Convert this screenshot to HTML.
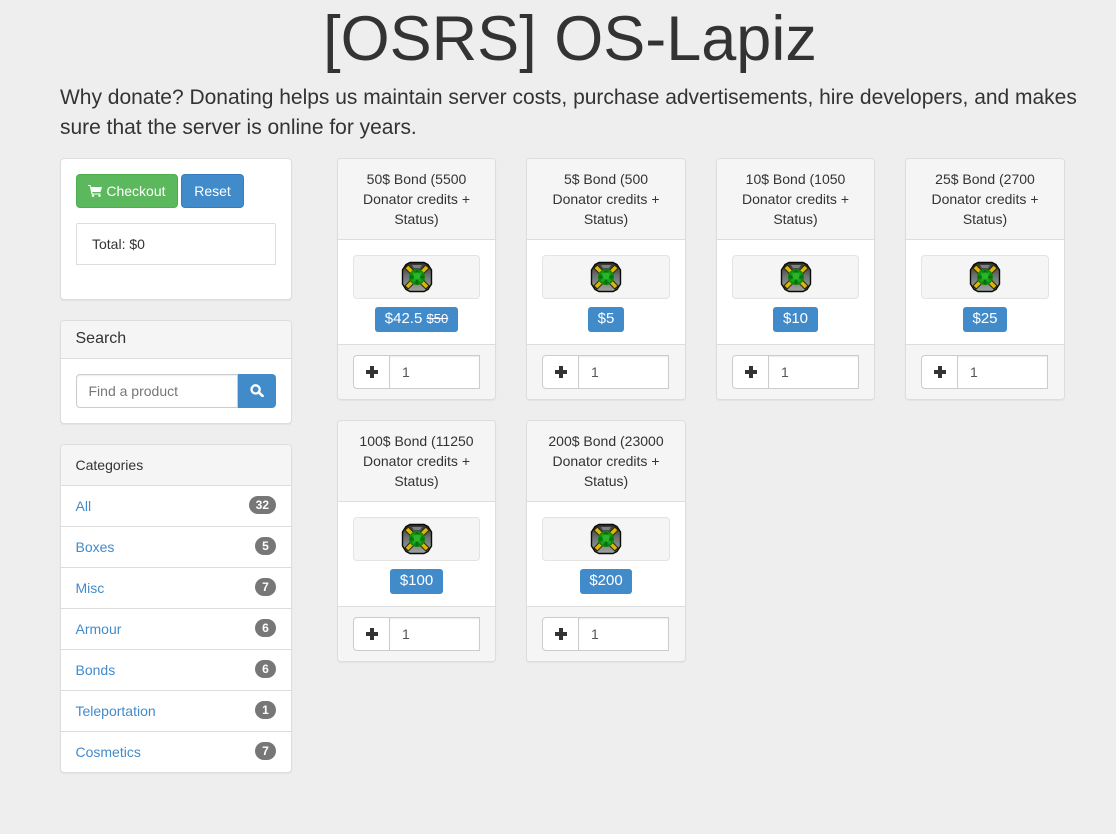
<!DOCTYPE html>
<html><head><meta charset="utf-8"><title>[OSRS] OS-Lapiz</title>
<style>
*{box-sizing:border-box}
html,body{margin:0;padding:0}
body{width:1116px;height:834px;overflow:hidden;background:#eee;font-family:"Liberation Sans",sans-serif;font-size:14px;line-height:20px;color:#333;position:relative}
.a{position:absolute}
h1{position:absolute;left:0;top:5px;width:1140px;margin:0;text-align:center;font-size:63px;line-height:69px;font-weight:400;color:#333}
p.lead{position:absolute;left:60px;top:83px;width:1040px;margin:0;font-size:21px;letter-spacing:-.01px;line-height:30px;color:#333}
.panel{position:absolute;background:#fff;border:1px solid #ddd;border-radius:4px;box-shadow:0 1px 1px rgba(0,0,0,.05)}
.head{background:#f5f5f5;border-bottom:1px solid #ddd;border-radius:3px 3px 0 0}
.btn{position:absolute;top:174px;height:34px;border-radius:4px;color:#fff;text-align:center;line-height:32px;border:1px solid}
.item{position:absolute;left:0;width:230px;height:41px;border-top:1px solid #ddd;color:#428bca;padding:10px 14.5px}
.badge{position:absolute;right:15px;top:10px;height:18px;min-width:21px;padding:0 7px;border-radius:10px;background:#777;color:#fff;font-size:12px;font-weight:700;line-height:18px;text-align:center}
.card{width:159px;height:242px}
.card .head{height:81px;padding:10px 15px;text-align:center}
.well{position:absolute;left:15px;top:96px;width:127px;height:44px;background:#f5f5f5;border:1px solid #e3e3e3;border-radius:4px}
.w2 .well{width:128px}
.well svg{position:absolute;left:47px;top:5px}
.price{position:absolute;top:148px;height:25px;left:0;width:100%;text-align:center}
.price span{display:inline-block;height:25px;line-height:24px;padding:0 9.5px;background:#428bca;color:#fff;font-size:15px;border-radius:3px}
.price s{font-size:13px}
.foot{position:absolute;left:0;top:185px;width:100%;height:55px;background:#f5f5f5;border-top:1px solid #ddd;border-radius:0 0 3px 3px}
.plus{position:absolute;left:15px;top:10px;width:37px;height:34px;background:#fff;border:1px solid #ccc;border-radius:4px 0 0 4px}
.plus:before{content:"";position:absolute;left:12px;top:14px;width:12px;height:4px;background:#333}
.plus:after{content:"";position:absolute;left:16px;top:10px;width:4px;height:12px;background:#333}
.qty{position:absolute;left:51px;top:10px;width:91px;height:34px;background:#fff;border:1px solid #ccc;padding-left:12px;line-height:32px;color:#555;box-shadow:inset 0 1px 1px rgba(0,0,0,.075)}
</style></head><body>
<svg width="0" height="0" style="position:absolute"><defs>
<linearGradient id="gg" x1="0" y1="0" x2="0" y2="1"><stop offset="0" stop-color="#2e2f2e"/><stop offset=".45" stop-color="#6c7270"/><stop offset="1" stop-color="#9ea4a2"/></linearGradient>
<symbol id="gem" viewBox="0 0 32 32">
<path d="M9 1.500H23L27 3.500 30.500 9V23L27 28.500 23 30.500H9L5 28.500 1.500 23V9L5 3.500Z" fill="url(#gg)" stroke="#0a0a0a" stroke-width="1.400"/>
<path d="M11 4H21L19 7H13Z" fill="#7c807e"/>
<path d="M5 5 13 13M27 5 19 13M5 27 13 19M27 27 19 19" stroke="#2a2600" stroke-width="5.500"/>
<path d="M6 6 13 13M26 6 19 13M6 26 13 19M26 26 19 19" stroke="#d8b60c" stroke-width="3.600"/>
<circle cx="16" cy="16" r="8" fill="#0c860c"/>
<path d="M16 9V23M9 16H23" stroke="#0a6e0a" stroke-width="2.500"/>
<path d="M11.500 11.500 20.500 20.500M20.500 11.500 11.500 20.500" stroke="#1aa61a" stroke-width="3"/>
<circle cx="16" cy="15" r="3.500" fill="#2ab52a"/>
</symbol></defs></svg>

<h1>[OSRS] OS-Lapiz</h1>
<p class="lead">Why donate? Donating helps us maintain server costs, purchase advertisements, hire developers, and makes sure that the server is online for years.</p>

<div class="panel" style="left:60px;top:158px;width:232px;height:142px"></div>
<div class="btn" style="left:76px;width:102px;background:#5cb85c;border-color:#4cae4c">
<svg width="14" height="13" viewBox="0 0 14 13" style="vertical-align:-1px"><path d="M0 1H2.500L3 3H14L12.500 8H4.200L4.500 9.500H12.500V10.500H3.500L1.800 2H0Z" fill="#fff"/><circle cx="5" cy="11.800" r="1.200" fill="#fff"/><circle cx="11.500" cy="11.800" r="1.200" fill="#fff"/></svg> Checkout</div>
<div class="btn" style="left:181px;width:63px;background:#428bca;border-color:#357ebd">Reset</div>
<div class="a" style="left:76px;top:223px;width:200px;height:42px;background:#fff;border:1px solid #ddd;border-radius:2px 2px 0 0;padding:10px 15px">Total: $0</div>

<div class="panel" style="left:60px;top:320px;width:232px;height:104px">
<div class="head" style="height:38px;padding:8px 14.5px;font-size:16px;line-height:20px">Search</div></div>
<div class="a" style="left:76px;top:374px;width:162px;height:34px;background:#fff;border:1px solid #ccc;border-radius:4px 0 0 4px;padding-left:11.500px;line-height:32px;color:#777;box-shadow:inset 0 1px 1px rgba(0,0,0,.075)">Find a product</div>
<div class="a" style="left:238px;top:374px;width:38px;height:34px;background:#428bca;border-radius:0 4px 4px 0">
<svg width="14" height="13" viewBox="0 0 14 13" style="position:absolute;left:11.500px;top:10px"><circle cx="5.600" cy="5.400" r="4.100" fill="none" stroke="#fff" stroke-width="2.300"/><path d="M8.800 8.400 12.600 12" stroke="#fff" stroke-width="2.600" stroke-linecap="round"/></svg></div>

<div class="panel" style="left:60px;top:444px;width:232px;height:329px">
<div class="head" style="height:41px;padding:10px 14.5px">Categories</div>
<div class="item" style="top:41px;border-top:0">All<span class="badge">32</span></div>
<div class="item" style="top:81px">Boxes<span class="badge">5</span></div>
<div class="item" style="top:122px">Misc<span class="badge">7</span></div>
<div class="item" style="top:163px">Armour<span class="badge">6</span></div>
<div class="item" style="top:204px">Bonds<span class="badge">6</span></div>
<div class="item" style="top:245px">Teleportation<span class="badge">1</span></div>
<div class="item" style="top:286px">Cosmetics<span class="badge">7</span></div>
</div>

<div class="panel card" style="left:337px;top:158px"><div class="head">50$ Bond (5500 Donator credits + Status)</div><div class="well"><svg width="32" height="32"><use href="#gem"/></svg></div><div class="price"><span>$42.5 <s>$50</s></span></div><div class="foot"><div class="plus"></div><div class="qty">1</div></div></div>
<div class="panel card w2" style="left:526px;top:158px;width:160px"><div class="head">5$ Bond (500 Donator credits + Status)</div><div class="well"><svg width="32" height="32"><use href="#gem"/></svg></div><div class="price"><span>$5</span></div><div class="foot"><div class="plus"></div><div class="qty">1</div></div></div>
<div class="panel card" style="left:716px;top:158px"><div class="head">10$ Bond (1050 Donator credits + Status)</div><div class="well"><svg width="32" height="32"><use href="#gem"/></svg></div><div class="price"><span>$10</span></div><div class="foot"><div class="plus"></div><div class="qty">1</div></div></div>
<div class="panel card w2" style="left:905px;top:158px;width:160px"><div class="head">25$ Bond (2700 Donator credits + Status)</div><div class="well"><svg width="32" height="32"><use href="#gem"/></svg></div><div class="price"><span>$25</span></div><div class="foot"><div class="plus"></div><div class="qty">1</div></div></div>
<div class="panel card" style="left:337px;top:420px"><div class="head">100$ Bond (11250 Donator credits + Status)</div><div class="well"><svg width="32" height="32"><use href="#gem"/></svg></div><div class="price"><span>$100</span></div><div class="foot"><div class="plus"></div><div class="qty">1</div></div></div>
<div class="panel card w2" style="left:526px;top:420px;width:160px"><div class="head">200$ Bond (23000 Donator credits + Status)</div><div class="well"><svg width="32" height="32"><use href="#gem"/></svg></div><div class="price"><span>$200</span></div><div class="foot"><div class="plus"></div><div class="qty">1</div></div></div>
</body></html>
